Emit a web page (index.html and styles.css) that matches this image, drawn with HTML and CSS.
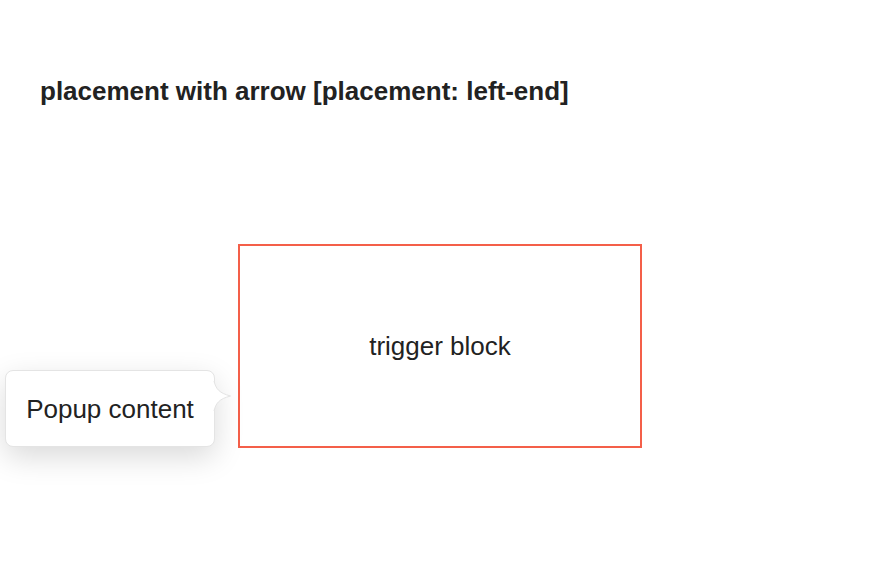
FILE: index.html
```html
<!DOCTYPE html>
<html>
<head>
<meta charset="utf-8">
<link rel="stylesheet" href="styles.css">
</head>
<body>
<div class="page">
  <h2 class="title">placement with arrow [placement: left-end]</h2>
  <div class="stage">
    <div class="trigger">
      trigger block
      <div class="popup">
        <span class="popup-text">Popup content</span>
        <svg class="arrow" width="18" height="30" viewBox="0 0 18 30">
          <path d="M0 0 C 2 8, 5 12, 16.5 15 C 5 18, 2 22, 0 30" fill="#ffffff" stroke="#e4e4e4" stroke-width="1"/>
        </svg>
      </div>
    </div>
  </div>
</div>
</body>
</html>
```
FILE: styles.css
```css
html, body {
  margin: 0;
  padding: 0;
  background: #ffffff;
}
body {
  font-family: "Liberation Sans", Arial, sans-serif;
  color: #222222;
}
.page {
  padding: 76px 40px 0 40px;
  min-height: 586px;
  box-sizing: border-box;
}
.title {
  margin: 0;
  font-size: 26px;
  line-height: 30px;
  font-weight: bold;
  color: #222222;
}
.stage {
  padding-top: 138px;
  padding-left: 198px;
}
.trigger {
  position: relative;
  width: 400px;
  height: 199px;
  padding-bottom: 1px;
  border: 2px solid #f45f49;
  display: flex;
  align-items: center;
  justify-content: center;
  font-size: 26px;
  line-height: 30px;
  box-sizing: content-box;
  color: #222222;
}
.popup {
  position: absolute;
  right: 425px;
  bottom: -1px;
  width: 208px;
  height: 75px;
  background: #ffffff;
  border: 1px solid #e4e4e4;
  border-radius: 8px;
  box-shadow: 0 10px 30px rgba(0, 0, 0, 0.15);
  display: flex;
  align-items: center;
  justify-content: center;
  font-size: 26px;
  color: #222222;
}
.arrow {
  position: absolute;
  right: -17.5px;
  top: 10px;
  overflow: visible;
}
```
